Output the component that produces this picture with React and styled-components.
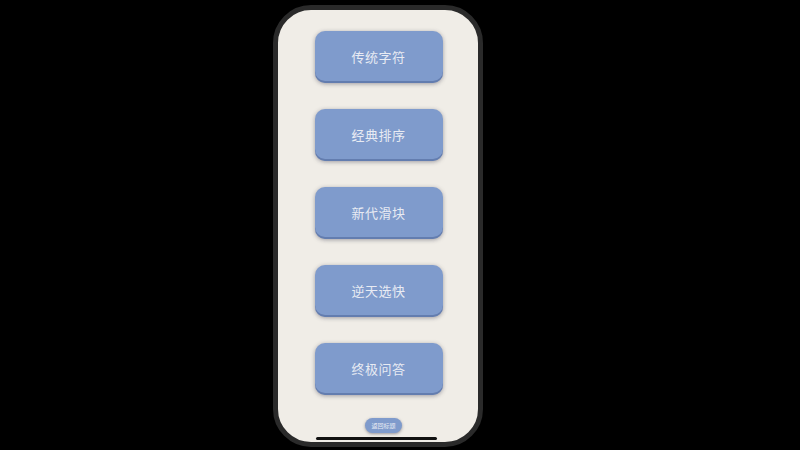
import React from "react";
import styled, { createGlobalStyle } from "styled-components";

const GlobalStyle = createGlobalStyle`
  html, body {
    margin: 0;
    padding: 0;
    background: #000;
  }
  * {
    box-sizing: border-box;
  }
`;

const Stage = styled.div`
  width: 800px;
  height: 450px;
  background: #000;
  display: flex;
  align-items: flex-start;
  padding: 5px 0 0 273px;
`;

const Phone = styled.div`
  width: 210px;
  height: 442px;
  border: 5px solid #2a2a2a;
  border-radius: 38px;
  background: #f0ede7;
  overflow: hidden;
  display: flex;
  flex-direction: column;
  align-items: center;
  padding-top: 21px;
`;

const Menu = styled.div`
  display: flex;
  flex-direction: column;
  gap: 26px;
  margin-left: 1px;
`;

const MenuButton = styled.button`
  width: 128px;
  height: 52px;
  border: none;
  border-radius: 10px;
  background: #7f9bcc;
  color: #e8ebf3;
  font-family: "Noto Sans CJK SC", "Noto Sans", sans-serif;
  font-size: 13px;
  letter-spacing: 0.5px;
  padding-bottom: 2px;
  box-shadow: 0 1px 4px rgba(60, 60, 80, 0.45),
    inset 0 -2px 0 rgba(50, 70, 120, 0.35);
  cursor: pointer;
`;

const Footer = styled.div`
  margin-top: auto;
  display: flex;
  flex-direction: column;
  align-items: center;
  gap: 4px;
  padding-bottom: 2px;
`;

const BackButton = styled.button`
  width: 37px;
  height: 15px;
  padding: 0;
  margin-left: 11px;
  border: none;
  border-radius: 8px;
  background: #7f9bcc;
  color: #e8ebf3;
  font-family: "Noto Sans CJK SC", sans-serif;
  font-size: 6px;
  box-shadow: 0 1px 3px rgba(60, 60, 80, 0.5);
`;

const HomeBar = styled.div`
  width: 121px;
  height: 3px;
  margin-right: 3px;
  border-radius: 2px;
  background: #111;
`;

const modes = ["传统字符", "经典排序", "新代滑块", "逆天选快", "终极问答"];

function App() {
  return (
    <>
      <GlobalStyle />
      <Stage>
        <Phone>
          <Menu>
            {modes.map((m) => (
              <MenuButton key={m}>{m}</MenuButton>
            ))}
          </Menu>
          <Footer>
            <BackButton>返回标题</BackButton>
            <HomeBar />
          </Footer>
        </Phone>
      </Stage>
    </>
  );
}

export default App;
